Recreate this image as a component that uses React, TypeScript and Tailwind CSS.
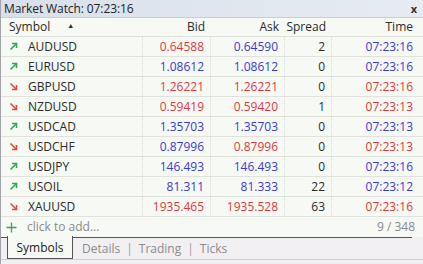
import React from "react";

type Row = { s: string; up: boolean; bid: string; ask: string; spread: string; time: string; bidC: string; askC: string; timeC: string };

const R = "text-[#e03a3e]";
const B = "text-[#3a3ad4]";

const rows: Row[] = [
  { s: "AUDUSD", up: true, bid: "0.64588", ask: "0.64590", spread: "2", time: "07:23:16", bidC: R, askC: B, timeC: B },
  { s: "EURUSD", up: true, bid: "1.08612", ask: "1.08612", spread: "0", time: "07:23:16", bidC: B, askC: B, timeC: B },
  { s: "GBPUSD", up: false, bid: "1.26221", ask: "1.26221", spread: "0", time: "07:23:16", bidC: R, askC: R, timeC: R },
  { s: "NZDUSD", up: false, bid: "0.59419", ask: "0.59420", spread: "1", time: "07:23:13", bidC: R, askC: R, timeC: R },
  { s: "USDCAD", up: true, bid: "1.35703", ask: "1.35703", spread: "0", time: "07:23:13", bidC: B, askC: B, timeC: B },
  { s: "USDCHF", up: false, bid: "0.87996", ask: "0.87996", spread: "0", time: "07:23:13", bidC: B, askC: R, timeC: R },
  { s: "USDJPY", up: true, bid: "146.493", ask: "146.493", spread: "0", time: "07:23:16", bidC: B, askC: B, timeC: B },
  { s: "USOIL", up: true, bid: "81.311", ask: "81.333", spread: "22", time: "07:23:12", bidC: B, askC: B, timeC: B },
  { s: "XAUUSD", up: false, bid: "1935.465", ask: "1935.528", spread: "63", time: "07:23:16", bidC: R, askC: R, timeC: R },
];

function Arrow({ up }: { up: boolean }) {
  const c = up ? "#2fa84f" : "#e8483c";
  return up ? (
    <svg width="9" height="9" viewBox="0 0 9 9" className="shrink-0">
      <path d="M1.5 7.5 L7.5 1.5" stroke={c} strokeWidth="1.6" />
      <path d="M3 1.5 H7.5 V6" stroke={c} strokeWidth="1.6" fill="none" />
    </svg>
  ) : (
    <svg width="9" height="9" viewBox="0 0 9 9" className="shrink-0">
      <path d="M1.5 1.5 L7.5 7.5" stroke={c} strokeWidth="1.6" />
      <path d="M3 7.5 H7.5 V3" stroke={c} strokeWidth="1.6" fill="none" />
    </svg>
  );
}

const grid = "grid grid-cols-[142px_68px_74px_47px_87px]";
const cellSep = "border-r border-dotted border-[#d8dcd6]";

export default function App() {
  return (
    <div
      className="w-[423px] h-[264px] overflow-hidden bg-[#f6f9f4] text-[12px] text-[#2b2b2b] flex flex-col border-l border-[#a0a4a8]"
      style={{ fontFamily: "'Open Sans', 'Noto Sans', sans-serif" }}
    >
      {/* title */}
      <div className="h-[18px] shrink-0 flex items-center justify-between pl-[3px] pr-[6px] bg-gradient-to-r from-[#d8e0ea] via-[#dfe6ee] to-[#e6ecf2] border-b border-[#c8ced6] text-[#222] leading-none">
        <span className="tracking-[-0.1px]">Market Watch: 07:23:16</span>
        <span className="text-[11px] font-bold text-[#333]">x</span>
      </div>
      {/* header */}
      <div className={`${grid} h-[19px] shrink-0 border-b border-[#dfe3dc] items-center leading-none`}>
        <div className="flex items-center pl-[8px] h-full">
          <span>Symbol</span>
          <span className="ml-[17px] text-[7px] mt-[-3px]">▲</span>
        </div>
        <div className="text-right pr-[6px]">Bid</div>
        <div className="text-right pr-[6px]">Ask</div>
        <div className="text-right pr-[6px]">Spread</div>
        <div className="text-right pr-[6px]">Time</div>
      </div>
      {rows.map((r) => (
        <div key={r.s} className={`${grid} h-[20px] shrink-0 border-b border-[#dfe3dc] items-stretch leading-none`}>
          <div className={`flex items-center pl-[8px] gap-[10px] ${cellSep}`}>
            <Arrow up={r.up} />
            <span>{r.s}</span>
          </div>
          <div className={`flex items-center justify-end pr-[6px] ${r.bidC} ${cellSep}`}>{r.bid}</div>
          <div className={`flex items-center justify-end pr-[6px] ${r.askC} ${cellSep}`}>{r.ask}</div>
          <div className={`flex items-center justify-end pr-[6px] ${cellSep}`}>{r.spread}</div>
          <div className={`flex items-center justify-end pr-[6px] ${r.timeC}`}>{r.time}</div>
        </div>
      ))}
      {/* add row */}
      <div className="h-[20px] shrink-0 flex items-center justify-between pl-[5px] pr-[8px] leading-none">
        <div className="flex items-center text-[#8a8a8a]">
          <svg width="11" height="11" viewBox="0 0 11 11" className="shrink-0">
            <path d="M5.5 0.5 V10.5 M0.5 5.5 H10.5" stroke="#3aa655" strokeWidth="1.3" />
          </svg>
          <span className="ml-[10px]">click to add...</span>
        </div>
        <span className="text-[#8a8a8a]">9 / 348</span>
      </div>
      {/* tabs */}
      <div className="h-[22px] shrink-0 flex bg-[#f1eff1] leading-none">
        <div className="w-[6px] border-t border-[#555]" />
        <div className="w-[66px] flex items-center justify-center border-l border-r border-b border-[#555] bg-[#f6f9f4] text-[#222] mt-[-1px] pt-[1px]">
          Symbols
        </div>
        <div className="flex-1 border-t border-[#555] flex items-center text-[#8c8c8c] pl-[9px] mr-[5px]">
          <span>Details</span>
          <span className="mx-[6px] text-[#9a9a9a]">|</span>
          <span>Trading</span>
          <span className="mx-[6px] text-[#9a9a9a]">|</span>
          <span>Ticks</span>
        </div>
        <div className="w-[6px]" />
      </div>
      <div className="flex-1 bg-[#f1eff1] border-t border-[#d0d0d0]" />
    </div>
  );
}
